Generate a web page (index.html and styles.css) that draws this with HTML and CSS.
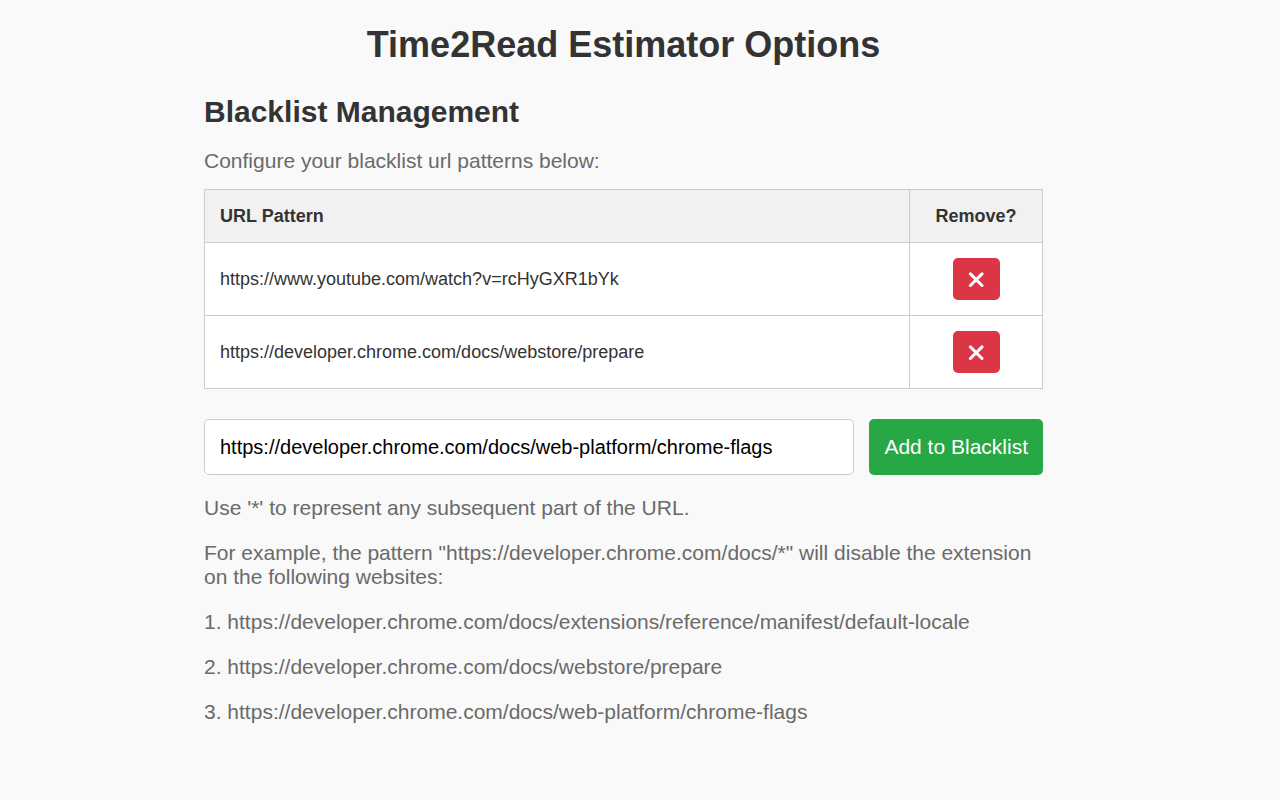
FILE: index.html
```html
<!DOCTYPE html>
<html lang="en">
<head>
<meta charset="utf-8">
<title>Time2Read Estimator Options</title>
<link rel="stylesheet" href="styles.css">
</head>
<body>
<main class="page">
  <h1 class="title">Time2Read Estimator Options</h1>
  <h2 class="subtitle">Blacklist Management</h2>
  <p class="text">Configure your blacklist url patterns below:</p>
  <table class="patterns">
    <thead>
      <tr><th class="pattern" scope="col">URL Pattern</th><th class="action" scope="col">Remove?</th></tr>
    </thead>
    <tbody>
      <tr>
        <td class="pattern">https://www.youtube.com/watch?v=rcHyGXR1bYk</td>
        <td class="action"><button class="remove" type="button" aria-label="Remove"><svg class="cross" viewBox="0 0 16 16" aria-hidden="true"><path d="M2.4 2.9L14 14.5M14 2.9L2.4 14.5"/></svg></button></td>
      </tr>
      <tr>
        <td class="pattern">https://developer.chrome.com/docs/webstore/prepare</td>
        <td class="action"><button class="remove" type="button" aria-label="Remove"><svg class="cross" viewBox="0 0 16 16" aria-hidden="true"><path d="M2.4 2.9L14 14.5M14 2.9L2.4 14.5"/></svg></button></td>
      </tr>
    </tbody>
  </table>
  <form class="add-form">
    <input class="url" type="text" aria-label="URL pattern" value="https://developer.chrome.com/docs/web-platform/chrome-flags">
    <button class="add" type="button">Add to Blacklist</button>
  </form>
  <p class="text">Use '*' to represent any subsequent part of the URL.</p>
  <p class="text">For example, the pattern "https://developer.chrome.com/docs/*" will disable the extension on the following websites:</p>
  <p class="text">1. https://developer.chrome.com/docs/extensions/reference/manifest/default-locale</p>
  <p class="text">2. https://developer.chrome.com/docs/webstore/prepare</p>
  <p class="text">3. https://developer.chrome.com/docs/web-platform/chrome-flags</p>
</main>
</body>
</html>
```
FILE: styles.css
```css
* {
  box-sizing: border-box;
}

body {
  margin: 0;
  padding: 24px 33px 0 0;
  background: #f9f9f9;
  color: #333;
  font-family: "Liberation Sans", Arial, sans-serif;
}

.page {
  max-width: 839px;
  margin: 0 auto;
}

.title {
  margin: 0 0 26px;
  font-size: 36px;
  line-height: 42px;
  text-align: center;
}

.subtitle {
  margin: 0 0 17px;
  font-size: 30px;
  line-height: 40px;
}

.text {
  margin: 0 0 21px;
  color: #6a6a6a;
  font-size: 21px;
  line-height: 24px;
}

.subtitle + .text {
  margin-bottom: 16px;
}

.patterns {
  width: 100%;
  margin-bottom: 30px;
  border-collapse: collapse;
  background: #fff;
  font-size: 18px;
  line-height: 20px;
}

.patterns th,
.patterns td {
  padding: 15px;
  border: 1px solid #ccc;
  text-align: left;
}

.patterns th {
  padding: 16px 15px;
  background: #f1f1f1;
}

.patterns .action {
  width: 133px;
  text-align: center;
}

.remove {
  display: block;
  width: 47px;
  height: 42px;
  margin: 0 auto;
  padding: 0;
  border: 0;
  border-radius: 5px;
  background: #dc3545;
}

.cross {
  display: block;
  width: 16px;
  height: 16px;
  margin: 0 auto;
  fill: none;
  stroke: #fff;
  stroke-width: 3;
  stroke-linecap: round;
}

.add-form {
  display: flex;
  gap: 15px;
  margin-bottom: 21px;
}

.url {
  flex: 1;
  min-width: 0;
  height: 56px;
  padding: 0 15px;
  border: 1px solid #ccc;
  border-radius: 5px;
  background: #fff;
  color: #000;
  font: 20px "Liberation Sans", Arial, sans-serif;
}

.add {
  padding: 0 15px;
  border: 0;
  border-radius: 5px;
  background: #28a745;
  color: #fff;
  font: 21px "Liberation Sans", Arial, sans-serif;
}
```
